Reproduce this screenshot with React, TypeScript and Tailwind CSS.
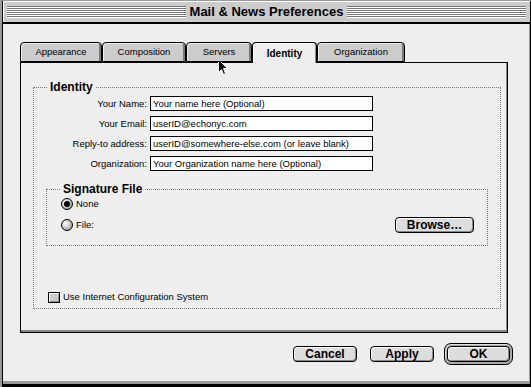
import React from "react";

const tabs = ["Appearance", "Composition", "Servers", "Identity", "Organization"];
const tabWidths = [82, 84, 66, 65, 88];

const fields = [
  { label: "Your Name", value: "Your name here (Optional)" },
  { label: "Your Email", value: "userID@echonyc.com" },
  { label: "Reply-to address", value: "userID@somewhere-else.com (or leave blank)" },
  { label: "Organization", value: "Your Organization name here (Optional)" },
];

function MacButton({ label, className = "" }: { label: string; className?: string }) {
  return (
    <div
      className={`h-[16px] flex items-center justify-center rounded-[4px] border border-black bg-[#dddddd] shadow-[inset_1px_1px_0_#ffffff,inset_-1px_-1px_0_#888888] text-[12px] font-bold leading-none ${className}`}
    >
      {label}
    </div>
  );
}

function Radio({ checked }: { checked?: boolean }) {
  return (
    <div className="w-[12px] h-[12px] rounded-full border border-black bg-[radial-gradient(circle_at_35%_35%,#ffffff,#bbbbbb_60%,#777777)] flex items-center justify-center">
      {checked && <div className="w-[6px] h-[6px] rounded-full bg-black" />}
    </div>
  );
}

function TitleStripes() {
  return (
    <div className="flex-1 flex flex-col gap-[1px] py-[5px]">
      {[0, 1, 2, 3, 4, 5].map((i) => (
        <div key={i} className="h-[1px] bg-[#777777] shadow-[0_1px_0_#ffffff]" />
      ))}
    </div>
  );
}

export default function App() {
  return (
    <div className="relative w-[531px] h-[387px] overflow-hidden bg-[#999999] pl-[2px] pt-[1px] font-['Liberation_Sans',Arial,sans-serif] text-black">
      <div className="h-full flex flex-col border-l border-r border-black border-b-[3px] border-b-black">
        {/* title bar */}
        <div className="h-[21px] bg-[#cccccc] flex items-center px-[4px] gap-[3px] shadow-[inset_1px_1px_0_#ffffff]">
          <TitleStripes />
          <div className="text-[13px] font-bold px-[1px] leading-none">Mail &amp; News Preferences</div>
          <TitleStripes />
        </div>
        <div className="h-[2px] bg-black" />

        {/* content */}
        <div className="flex-1 bg-[#eeeeee] border-b-[3px] border-[#999999] border-r border-r-[#999999] pl-[17px] pt-[18px] flex flex-col">
          {/* tabs */}
          <div className="flex items-end h-[20px] relative z-10">
            {tabs.map((t, i) => {
              const sel = t === "Identity";
              return (
                <div
                  key={t}
                  style={{ width: tabWidths[i] }}
                  className={`flex items-center justify-center border border-black rounded-t-[4px] text-[9.5px] ${
                    sel
                      ? "h-[21px] -mb-px border-b-0 bg-[#eeeeee] font-bold text-[10px] shadow-[inset_1px_1px_0_#ffffff,inset_-1px_0_0_#888888]"
                      : "h-[20px] bg-[#cccccc] shadow-[inset_1px_1px_0_#eeeeee,inset_-2px_0_0_#777777]"
                  }`}
                >
                  {t}
                </div>
              );
            })}
          </div>

          {/* panel */}
          <div className="w-[488px] h-[271px] border border-black bg-[#eeeeee] shadow-[inset_-1px_-2px_0_#888888] pl-[12px] pt-[17px]">
            <fieldset className="w-[468px] h-[229px] border border-dotted border-[#777777] px-0 pt-0">
              <legend className="ml-[13px] px-[3px] text-[12px] font-bold leading-[14px]">Identity</legend>
              <div className="grid grid-cols-[113px_223px] gap-x-[3px] gap-y-[5px] mt-[2px]">
                {fields.map((f) => (
                  <React.Fragment key={f.label}>
                    <div className="text-right text-[9.5px] leading-[15px]">{f.label}:</div>
                    <div className="h-[15px] border border-black bg-white text-[9.5px] leading-[13px] pl-[2px] whitespace-nowrap overflow-hidden">
                      {f.value}
                    </div>
                  </React.Fragment>
                ))}
              </div>

              <fieldset className="ml-[12px] mt-[11px] w-[442px] h-[64px] border border-dotted border-[#777777] px-0 pt-0">
                <legend className="ml-[13px] px-[3px] text-[12px] font-bold leading-[14px]">Signature File</legend>
                <div className="flex items-center gap-[3px] pl-[14px] mt-[1px]">
                  <Radio checked />
                  <span className="text-[9.5px]">None</span>
                </div>
                <div className="flex items-center pl-[14px] pr-[13px] mt-[6px]">
                  <Radio />
                  <span className="text-[9.5px] ml-[3px] flex-1">File:</span>
                  <MacButton label="Browse…" className="w-[79px]" />
                </div>
              </fieldset>

              <div className="flex items-center gap-[3px] pl-[14px] mt-[44px]">
                <div className="w-[12px] h-[11px] border border-black bg-[#cccccc] shadow-[inset_1px_1px_0_#ffffff,inset_-1px_-1px_0_#888888]" />
                <span className="text-[9.5px]">Use Internet Configuration System</span>
              </div>
            </fieldset>
          </div>

          {/* buttons */}
          <div className="flex items-center justify-end gap-[13px] pr-[16px] mt-[10px]">
            <MacButton label="Cancel" className="w-[64px]" />
            <MacButton label="Apply" className="w-[64px]" />
            <div className="ml-[-3px] rounded-[7px] border border-black p-[2px] bg-[#aaaaaa] shadow-[inset_1px_1px_0_#dddddd]">
              <MacButton label="OK" className="w-[63px]" />
            </div>
          </div>
        </div>
      </div>

      {/* mouse pointer */}
      <svg className="absolute left-[218px] top-[59px]" width="11" height="17" viewBox="0 0 11 17">
        <path d="M0.5 0.5 L0.5 13.5 L3.5 10.5 L5.5 15.5 L7.5 14.5 L5.5 9.5 L9.5 9.5 Z" fill="black" stroke="white" strokeWidth="1" />
      </svg>
    </div>
  );
}
